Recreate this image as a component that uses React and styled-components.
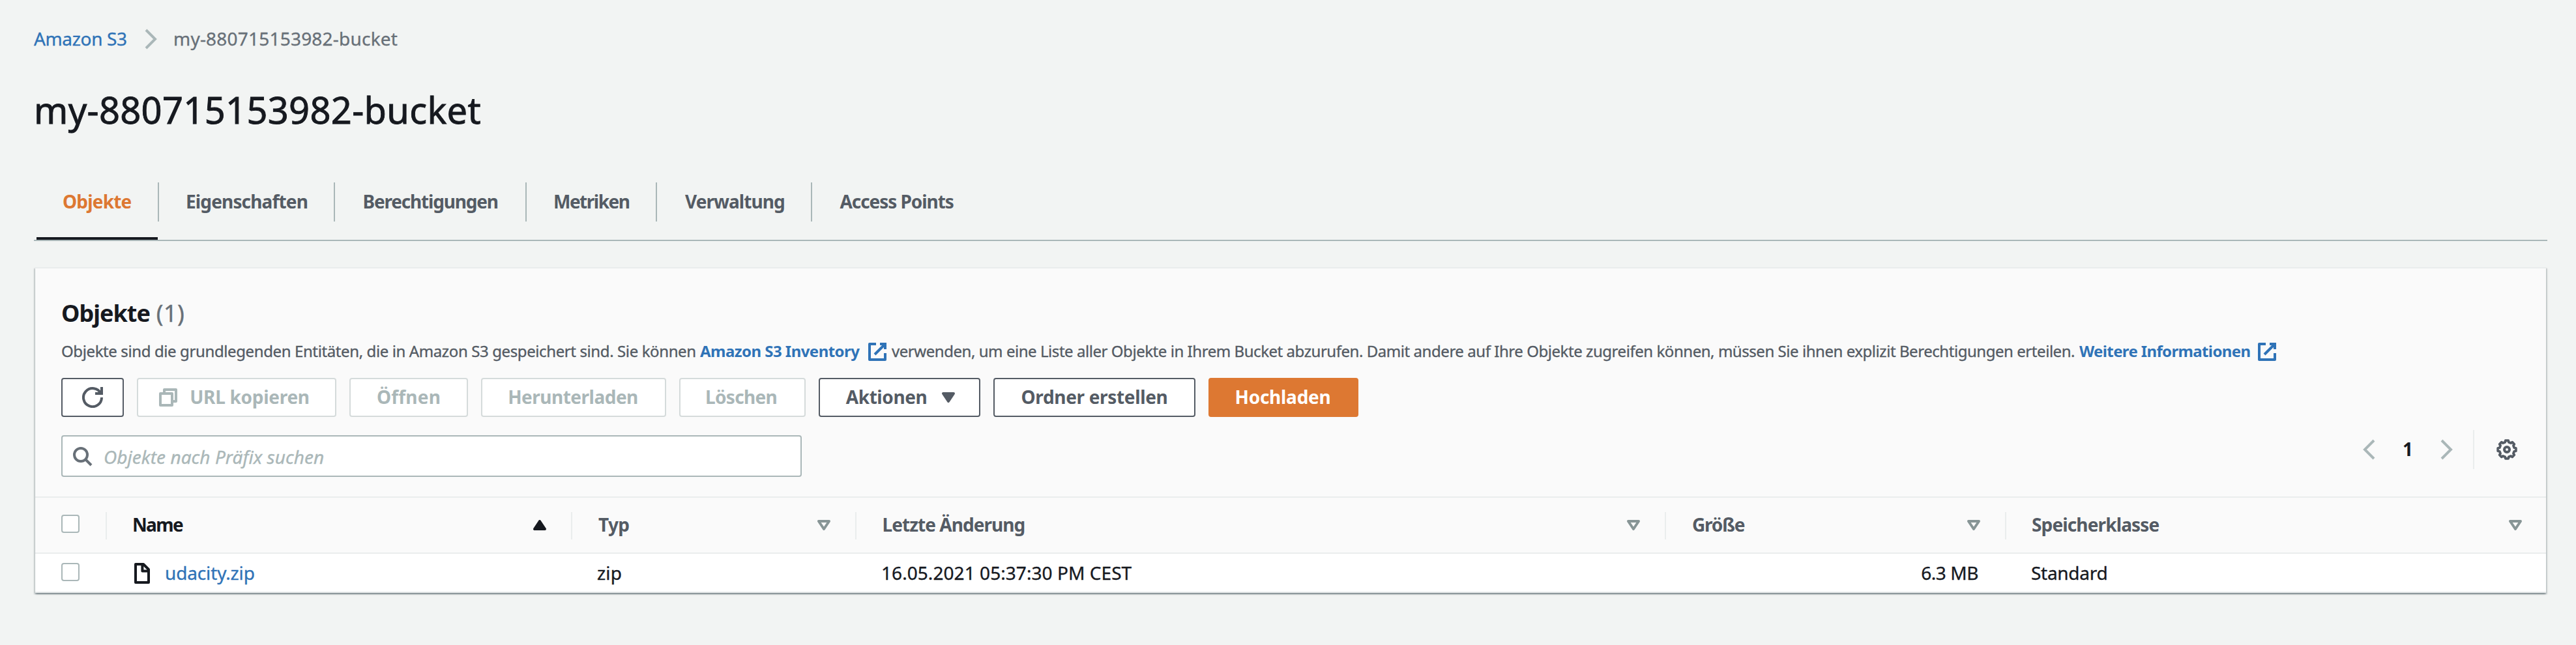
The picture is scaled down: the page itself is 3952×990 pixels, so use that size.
import React from 'react';
import styled, { createGlobalStyle } from 'styled-components';

const color = {
  page: '#f2f4f3',
  panel: '#fafafa',
  ink: '#16191f',
  slate: '#545b64',
  grey: '#687078',
  muted: '#aab7b8',
  faint: '#d5dbdb',
  line: '#eaeded',
  link: '#2f73b7',
  accent: '#dd7832',
};

const GlobalStyle = createGlobalStyle`
  * { box-sizing: border-box; }
  body {
    margin: 0;
    background: ${color.page};
    color: ${color.ink};
    font-family: "Noto Sans", "Open Sans", sans-serif;
    font-size: 28px;
    line-height: 40px;
    -webkit-text-stroke: 0.35px;
  }
`;

const Page = styled.main`
  width: 3952px;
  height: 990px;
  padding: 39px 44px 0 52px;
  overflow: hidden;
`;

const Text = styled.span`
  letter-spacing: ${(p) => p.$track || 0}px;
  white-space: nowrap;
`;

const Icon = styled.svg`
  display: block;
  flex: none;
  width: 32px;
  height: 32px;
  fill: none;
  stroke: currentColor;
  stroke-width: 2;
`;

/* Breadcrumb and title */
const Breadcrumb = styled.nav`
  display: flex;
  align-items: center;
  height: 40px;
  color: ${color.grey};
  ${Icon} {
    margin: 2px 18px 0 0;
    color: ${color.muted};
  }
`;

const Crumb = styled(Text)`
  width: 164px;
  color: ${color.link};
`;

const Title = styled.h1`
  margin: 53px 0 0;
  font-size: 56px;
  font-weight: 400;
  line-height: 72px;
  letter-spacing: 0.32px;
  -webkit-text-stroke: 0.9px;
`;

/* Tabs */
const TabList = styled.div`
  display: flex;
  margin-top: 76px;
  padding-left: 4px;
  border-bottom: 2px solid ${color.muted};
`;

const Tab = styled.div`
  width: ${(p) => p.$width}px;
  height: 88px;
  padding-left: ${(p) => p.$inset}px;
  border-bottom: 4px solid ${(p) => (p.$active ? color.ink : 'transparent')};
  color: ${(p) => (p.$active ? color.accent : color.slate)};
  font-weight: 700;
  line-height: 58px;
  -webkit-text-stroke: 0;
`;

const Divider = styled.span`
  flex: none;
  width: 2px;
  height: 60px;
  background: ${(p) => p.$tone};
`;

/* Panel */
const Panel = styled.section`
  margin: 40px 2px 0;
  border-top: 2px solid ${color.line};
  background: ${color.panel};
  box-shadow: 0 2px 2px 0 rgba(0, 28, 36, 0.3), 2px 2px 2px 0 rgba(0, 28, 36, 0.15),
    -2px 2px 2px 0 rgba(0, 28, 36, 0.15);
`;

const PanelHeader = styled.header`
  padding: 47px 44px 30px 40px;
`;

const PanelTitle = styled.h2`
  margin: 0;
  font-size: 36px;
  line-height: 44px;
  letter-spacing: -1px;
  -webkit-text-stroke: 0;
`;

const Count = styled.span`
  margin-left: 1.5px;
  color: ${color.grey};
  font-weight: 400;
  letter-spacing: 0.4px;
  -webkit-text-stroke: 0.4px;
`;

const Description = styled.div`
  display: flex;
  align-items: center;
  margin-top: 20px;
  height: 32px;
  color: ${color.slate};
  font-size: 24px;
  line-height: 32px;
`;

const Sentence = styled(Text)`
  width: ${(p) => p.$width}px;
`;

const ExternalLink = styled.a`
  display: flex;
  align-items: center;
  width: ${(p) => p.$width}px;
  margin-right: 6px;
  color: ${color.link};
  font-weight: 700;
  -webkit-text-stroke: 0;
  ${Icon} {
    margin: 2px 0 0 auto;
  }
`;

const Toolbar = styled.div`
  display: flex;
  gap: 20px;
  margin-top: 25px;
`;

const buttonTones = {
  normal: `border-color: ${color.slate}; color: ${color.slate};`,
  disabled: `border-color: ${color.faint}; color: ${color.muted};`,
  primary: `border-color: ${color.accent}; background: ${color.accent}; color: #fff;`,
};

const Button = styled.button`
  display: flex;
  align-items: center;
  justify-content: center;
  gap: 17px;
  width: ${(p) => p.$width}px;
  height: 60px;
  padding: 0 ${(p) => p.$end || 0}px 2px ${(p) => p.$start || 0}px;
  border: 2px solid;
  border-radius: 4px;
  background: #fff;
  font: 700 28px/40px "Noto Sans", "Open Sans", sans-serif;
  -webkit-text-stroke: 0;
  ${(p) => buttonTones[p.$tone || 'normal']}
  ${Icon} {
    margin-top: 2px;
  }
`;

const FilterRow = styled.div`
  display: flex;
  justify-content: space-between;
  align-items: flex-start;
  height: 72px;
  margin-top: 20px;
`;

const SearchBox = styled.label`
  display: flex;
  align-items: center;
  width: 1136px;
  height: 64px;
  margin-top: 8px;
  padding: 0 14px;
  border: 2px solid ${color.muted};
  border-radius: 4px;
  background: #fff;
  color: ${color.grey};
`;

const Placeholder = styled(Text)`
  margin: 2px 0 0 17px;
  color: ${color.muted};
  font-style: italic;
`;

const Pagination = styled.div`
  display: flex;
  align-items: center;
  height: 60px;
  color: ${color.muted};
`;

const PageNumber = styled.span`
  width: 88px;
  margin-top: -2px;
  color: ${color.ink};
  font-weight: 700;
  text-align: center;
  -webkit-text-stroke: 0;
`;

const PageEdge = styled(Divider)`
  margin: 0 34px 0 24px;
`;

const Settings = styled.span`
  color: ${color.slate};
`;

/* Table */
const Row = styled.div`
  display: grid;
  grid-template-columns: 110px 714px 436px 1242px 522px 1fr;
  height: ${(p) => (p.$head ? 88 : 60)}px;
  border-top: ${(p) => (p.$head ? 2 : 0)}px solid ${color.line};
  border-bottom: 2px solid ${color.line};
  background: ${(p) => (p.$head ? color.panel : '#fff')};
`;

const HeadCell = styled.div`
  display: flex;
  align-items: center;
  justify-content: space-between;
  padding: 0 0 2px ${(p) => p.$inset}px;
  color: ${(p) => (p.$sorted ? color.ink : color.slate)};
  font-weight: 700;
  -webkit-text-stroke: 0;
  ${Icon} {
    margin: 2px ${(p) => (p.$last ? 31 : 32)}px 0 auto;
    color: ${(p) => (p.$sorted ? color.ink : '#879596')};
  }
`;

const ColumnEdge = styled(Divider)`
  height: 42px;
  margin-top: 4px;
`;

const Cell = styled.div`
  display: flex;
  align-items: center;
  justify-content: ${(p) => (p.$numeric ? 'flex-end' : 'flex-start')};
  padding: 0 ${(p) => (p.$numeric ? 43 : 0)}px 0 38px;
`;

const CheckCell = styled.div`
  display: flex;
  align-items: center;
  justify-content: space-between;
  padding: 0 0 ${(p) => (p.$head ? 2 : 0)}px 40px;
`;

const Checkbox = styled.span`
  width: 28px;
  height: 28px;
  margin-top: -2px;
  border: 2px solid ${color.muted};
  border-radius: 4px;
  background: #fff;
`;

const FileLink = styled.a`
  display: flex;
  align-items: center;
  gap: 19px;
  color: ${color.link};
  ${Icon} {
    margin-top: 2px;
    color: ${color.ink};
  }
`;

const Chevron = ({ left }) => (
  <Icon viewBox="0 0 16 16">
    <path d={left ? 'M12 1L5 8l7 7' : 'M4 1l7 7-7 7'} />
  </Icon>
);

const External = () => (
  <Icon viewBox="0 0 16 16">
    <path d="M10 2h4v4M6 10l8-8" />
    <path strokeLinejoin="round" d="M14 9.05V14H2V2h5" />
  </Icon>
);

const Refresh = () => (
  <Icon viewBox="0 0 16 16">
    <path d="M10 5h5V0M15 8a7 7 0 1 1-.7-3" />
  </Icon>
);

const Copy = () => (
  <Icon viewBox="0 0 16 16" strokeLinejoin="round">
    <path d="M5 5V2h9v9h-3M2 5h9v9H2z" />
  </Icon>
);

const Search = () => (
  <Icon viewBox="0 0 16 16">
    <circle cx="7" cy="7" r="5" />
    <path d="M10.5 10.5L15 15" />
  </Icon>
);

const File = () => (
  <Icon viewBox="0 0 16 16" strokeLinejoin="round">
    <path d="M3 1h6l4 4v10H3zM8.2 1v5.2H13" />
  </Icon>
);

const Caret = ({ up, solid }) => (
  <Icon viewBox="0 0 16 16" strokeLinejoin="round">
    <path d={up ? 'M4 11h8L8 5z' : 'M4 5h8l-4 6z'} fill={solid ? 'currentColor' : 'none'} />
  </Icon>
);

const gearPoint = (radius, degrees) => {
  const a = (degrees * Math.PI) / 180;
  return `${(16 + radius * Math.cos(a)).toFixed(2)} ${(16 + radius * Math.sin(a)).toFixed(2)}`;
};

const gearPath = `M${Array.from({ length: 8 }, (_, i) => [
  gearPoint(14, i * 45 - 9),
  gearPoint(14, i * 45 + 9),
  gearPoint(11.6, i * 45 + 14),
  gearPoint(11.6, i * 45 + 31),
])
  .flat()
  .join('L')}Z`;

const Gear = () => (
  <Icon viewBox="0 0 32 32" strokeLinejoin="round">
    <path d={gearPath} strokeWidth="3.8" />
    <circle cx="16" cy="16" r="4" strokeWidth="4" />
  </Icon>
);

const tabs = [
  { label: 'Objekte', width: 186, inset: 40, track: -0.8, active: true },
  { label: 'Eigenschaften', width: 268, inset: 41, track: -0.85 },
  { label: 'Berechtigungen', width: 292, inset: 42.5, track: -1.18 },
  { label: 'Metriken', width: 198, inset: 41, track: -1.5 },
  { label: 'Verwaltung', width: 236, inset: 43, track: -0.95 },
  { label: 'Access Points', width: 300, inset: 42.5, track: -1.06 },
];

const columns = [
  { label: 'Name', inset: 39, track: -1.65, sorted: true },
  { label: 'Typ', inset: 40, track: -0.7 },
  { label: 'Letzte Änderung', inset: 39.5, track: -0.96 },
  { label: 'Größe', inset: 40, track: -1.2 },
  { label: 'Speicherklasse', inset: 39, track: -0.86 },
];

export default function App() {
  return (
    <Page>
      <GlobalStyle />
      <Breadcrumb>
        <Crumb $track={-0.35}>Amazon S3</Crumb>
        <Chevron />
        <Text $track={0.21}>my-880715153982-bucket</Text>
      </Breadcrumb>
      <Title>my-880715153982-bucket</Title>

      <TabList>
        {tabs.map((tab, i) => (
          <React.Fragment key={tab.label}>
            {i > 0 && <Divider $tone={color.muted} />}
            <Tab $width={tab.width} $inset={tab.inset} $active={tab.active}>
              <Text $track={tab.track}>{tab.label}</Text>
            </Tab>
          </React.Fragment>
        ))}
      </TabList>

      <Panel>
        <PanelHeader>
          <PanelTitle>
            Objekte <Count>(1)</Count>
          </PanelTitle>
          <Description>
            <Sentence $width={980} $track={-0.39}>
              Objekte sind die grundlegenden Entitäten, die in Amazon S3 gespeichert sind. Sie können
            </Sentence>
            <ExternalLink $width={288}>
              <Text $track={-0.54}>Amazon S3 Inventory</Text>
              <External />
            </ExternalLink>
            <Sentence $width={1822} $track={-0.45}>
              verwenden, um eine Liste aller Objekte in Ihrem Bucket abzurufen. Damit andere auf Ihre
              Objekte zugreifen können, müssen Sie ihnen explizit Berechtigungen erteilen.
            </Sentence>
            <ExternalLink $width={303.5}>
              <Text $track={-0.63}>Weitere Informationen</Text>
              <External />
            </ExternalLink>
          </Description>

          <Toolbar>
            <Button $width={96}>
              <Refresh />
            </Button>
            <Button $width={306} $tone="disabled" $end={9}>
              <Copy />
              <Text $track={-0.29}>URL kopieren</Text>
            </Button>
            <Button $width={182} $tone="disabled">
              <Text $track={0.2}>Öffnen</Text>
            </Button>
            <Button $width={284} $tone="disabled" $end={2}>
              <Text $track={-0.5}>Herunterladen</Text>
            </Button>
            <Button $width={194} $tone="disabled" $end={4}>
              <Text $track={-0.65}>Löschen</Text>
            </Button>
            <Button $width={248} $start={9}>
              <Text $track={-0.42}>Aktionen</Text>
              <Caret solid />
            </Button>
            <Button $width={310}>
              <Text $track={-0.33}>Ordner erstellen</Text>
            </Button>
            <Button $width={230} $tone="primary" $end={2}>
              <Text $track={-0.27}>Hochladen</Text>
            </Button>
          </Toolbar>

          <FilterRow>
            <SearchBox>
              <Search />
              <Placeholder $track={0.05}>Objekte nach Präfix suchen</Placeholder>
            </SearchBox>
            <Pagination>
              <Chevron left />
              <PageNumber>1</PageNumber>
              <Chevron />
              <PageEdge $tone={color.line} />
              <Settings>
                <Gear />
              </Settings>
            </Pagination>
          </FilterRow>
        </PanelHeader>

        <Row $head>
          <CheckCell $head>
            <Checkbox />
            <ColumnEdge $tone={color.line} />
          </CheckCell>
          {columns.map((column, i) => {
            const last = i === columns.length - 1;
            return (
              <HeadCell
                key={column.label}
                $inset={column.inset}
                $sorted={column.sorted}
                $last={last}
              >
                <Text $track={column.track}>{column.label}</Text>
                <Caret up={column.sorted} solid={column.sorted} />
                {!last && <ColumnEdge $tone={color.line} />}
              </HeadCell>
            );
          })}
        </Row>
        <Row>
          <CheckCell>
            <Checkbox />
          </CheckCell>
          <Cell>
            <FileLink>
              <File />
              <Text $track={-0.14}>udacity.zip</Text>
            </FileLink>
          </Cell>
          <Cell>
            <Text $track={0.15}>zip</Text>
          </Cell>
          <Cell>
            <Text $track={0.06}>16.05.2021 05:37:30 PM CEST</Text>
          </Cell>
          <Cell $numeric>
            <Text $track={-0.44}>6.3 MB</Text>
          </Cell>
          <Cell>
            <Text $track={-0.29}>Standard</Text>
          </Cell>
        </Row>
      </Panel>
    </Page>
  );
}
